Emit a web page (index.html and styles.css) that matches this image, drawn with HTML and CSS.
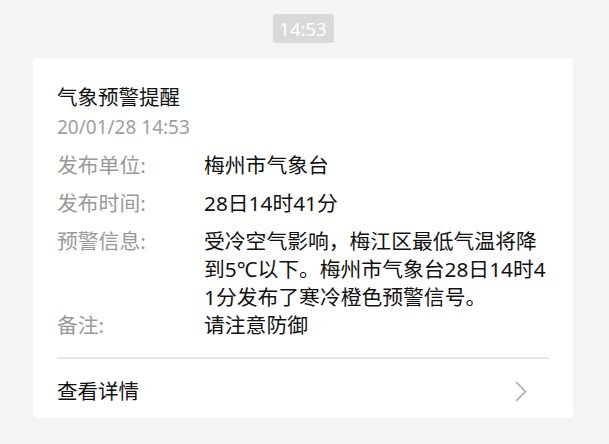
FILE: index.html
```html
<!DOCTYPE html>
<html lang="zh-CN">
<head>
<meta charset="utf-8">
<title>气象预警提醒</title>
<link rel="stylesheet" href="styles.css">
</head>
<body>
<div class="page">
  <div class="time-wrap"><span class="time-badge">14:53</span></div>
  <div class="card">
    <div class="card-body">
      <div class="title">气象预警提醒</div>
      <div class="date">20/01/28 14:53</div>
      <div class="rows">
        <div class="row gap">
          <div class="label">发布单位:</div>
          <div class="value">梅州市气象台</div>
        </div>
        <div class="row gap">
          <div class="label">发布时间:</div>
          <div class="value">28日14时41分</div>
        </div>
        <div class="row">
          <div class="label">预警信息:</div>
          <div class="value">受冷空气影响，梅江区最低气温将降到5℃以下。梅州市气象台28日14时41分发布了寒冷橙色预警信号。</div>
        </div>
        <div class="row">
          <div class="label">备注:</div>
          <div class="value">请注意防御</div>
        </div>
      </div>
    </div>
    <div class="divider"></div>
    <div class="footer">
      <span class="more">查看详情</span>
      <svg class="chevron" width="12" height="21" viewBox="0 0 12 21" aria-hidden="true">
        <path d="M1.2 1.2 L10.5 10.5 L1.2 19.8" fill="none" stroke="#b3b3b3" stroke-width="1.8"/>
      </svg>
    </div>
  </div>
</div>
</body>
</html>
```
FILE: styles.css
```css
html, body {
  margin: 0;
  padding: 0;
  background: #f4f4f4;
}
body {
  font-family: "Noto Sans", "Noto Sans CJK SC", sans-serif;
  width: 609px;
  height: 444px;
  overflow: hidden;
}
.page {
  padding: 14px 36px 0 33px;
}
.time-wrap {
  display: flex;
  justify-content: center;
  margin-bottom: 15px;
}
.time-badge {
  display: inline-block;
  width: 61px;
  height: 29px;
  line-height: 29px;
  text-align: center;
  background: #d9d9d9;
  color: #ffffff;
  font-size: 18.5px;
  border-radius: 3px;
}
.card {
  background: #ffffff;
  border-radius: 4px;
  width: 540px;
}
.card-body {
  padding: 24px 24px 18px 24px;
}
.title {
  font-size: 20.5px;
  line-height: 30px;
  color: #111;
}
.date {
  font-size: 19px;
  line-height: 30px;
  color: #a0a0a0;
  margin-bottom: 9px;
}
.row {
  display: flex;
  font-size: 20.8px;
  line-height: 28px;
}
.row.gap {
  margin-bottom: 10px;
}
.label {
  width: 147px;
  flex: none;
  color: #999999;
}
.value {
  flex: 1;
  color: #111;
  word-break: break-all;
}
.divider {
  height: 2px;
  background: #e6e6e6;
  margin: 0 24px;
}
.footer {
  display: flex;
  align-items: center;
  justify-content: space-between;
  padding: 18px 46px 13px 24px;
  height: 28px;
}
.more {
  font-size: 20.5px;
  line-height: 28px;
  color: #111;
}
.chevron {
  display: block;
}
```
